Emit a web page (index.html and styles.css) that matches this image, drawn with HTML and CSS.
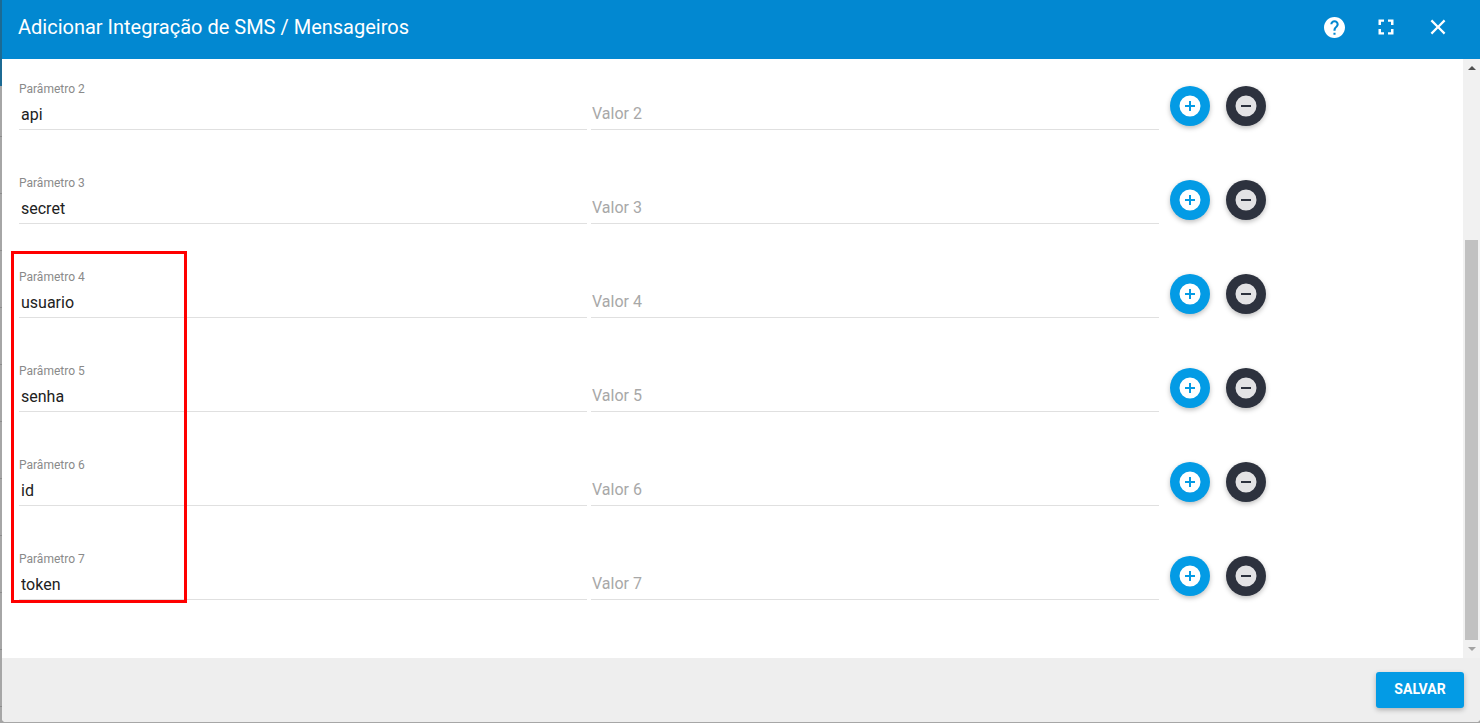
FILE: index.html
```html
<!DOCTYPE html>
<html lang="pt-BR">
<head>
    <meta charset="UTF-8">
    <meta name="viewport" content="width=device-width, initial-scale=1.0">
    <title>Adicionar Integração de SMS / Mensageiros</title>
    <link rel="stylesheet" href="styles.css">
</head>
<body>
    <!-- shared icons -->
    <svg class="sprite" aria-hidden="true">
        <symbol id="icon-add" viewBox="0 0 24 24">
            <path fill-rule="evenodd" d="M12 1.5a10.5 10.5 0 1 0 0 21a10.5 10.5 0 1 0 0-21zM17 13h-4v4h-2v-4H7v-2h4V7h2v4h4z"/>
        </symbol>
        <symbol id="icon-remove" viewBox="0 0 24 24">
            <path fill-rule="evenodd" d="M12 1.5a10.5 10.5 0 1 0 0 21a10.5 10.5 0 1 0 0-21zM17 13H7v-2h10z"/>
        </symbol>
    </svg>

    <div class="dialog" role="dialog" aria-labelledby="dialog-title">
        <header class="toolbar">
            <h1 class="toolbar-title" id="dialog-title">Adicionar Integração de SMS / Mensageiros</h1>
            <button class="icon-button" type="button" aria-label="Ajuda">
                <svg class="icon-help" viewBox="2 2 20 20"><path d="M12 2C6.48 2 2 6.48 2 12s4.480 10 10 10 10-4.480 10-10S17.520 2 12 2zm1 17h-2v-2h2v2zm2.070-7.750l-.9.920C13.450 12.900 13 13.500 13 15h-2v-.5c0-1.100.45-2.100 1.170-2.830l1.240-1.260c.37-.36.59-.86.59-1.410 0-1.100-.9-2-2-2s-2 .9-2 2H8c0-2.210 1.790-4 4-4s4 1.790 4 4c0 .88-.36 1.680-.93 2.250z"/></svg>
            </button>
            <button class="icon-button" type="button" aria-label="Tela cheia">
                <svg class="icon" viewBox="0 0 24 24"><path d="M7 14H4.500v5.500H10v-2.300H7V14zm-2.500-4H7V6.800h3V4.500H4.500V10zm12.500 7.200h-3v2.300h5.500V14H17v3.200zM14 4.500v2.300h3V10h2.500V4.500H14z"/></svg>
            </button>
            <button class="icon-button" type="button" aria-label="Fechar">
                <svg class="icon" viewBox="0 0 24 24"><path d="M19.400 6.200L17.800 4.600 12 10.400 6.200 4.600 4.600 6.200 10.400 12 4.600 17.800 6.200 19.400 12 13.600 17.800 19.400 19.400 17.800 13.600 12z"/></svg>
            </button>
        </header>

        <main class="content">
            <form class="params" id="params-form">
                <div class="row">
                    <div class="field">
                        <label for="param2">Parâmetro 2</label>
                        <input type="text" id="param2" value="api">
                    </div>
                    <div class="field value">
                        <input type="text" placeholder="Valor 2" aria-label="Valor 2">
                    </div>
                    <div class="actions">
                        <button class="fab add" type="button" aria-label="Adicionar"><svg class="icon"><use href="#icon-add"/></svg></button>
                        <button class="fab remove" type="button" aria-label="Remover"><svg class="icon"><use href="#icon-remove"/></svg></button>
                    </div>
                </div>
                <div class="row">
                    <div class="field">
                        <label for="param3">Parâmetro 3</label>
                        <input type="text" id="param3" value="secret">
                    </div>
                    <div class="field value">
                        <input type="text" placeholder="Valor 3" aria-label="Valor 3">
                    </div>
                    <div class="actions">
                        <button class="fab add" type="button" aria-label="Adicionar"><svg class="icon"><use href="#icon-add"/></svg></button>
                        <button class="fab remove" type="button" aria-label="Remover"><svg class="icon"><use href="#icon-remove"/></svg></button>
                    </div>
                </div>

                <div class="highlighted">
                    <div class="row">
                        <div class="field">
                            <label for="param4">Parâmetro 4</label>
                            <input type="text" id="param4" value="usuario">
                        </div>
                        <div class="field value">
                            <input type="text" placeholder="Valor 4" aria-label="Valor 4">
                        </div>
                        <div class="actions">
                            <button class="fab add" type="button" aria-label="Adicionar"><svg class="icon"><use href="#icon-add"/></svg></button>
                            <button class="fab remove" type="button" aria-label="Remover"><svg class="icon"><use href="#icon-remove"/></svg></button>
                        </div>
                    </div>
                    <div class="row">
                        <div class="field">
                            <label for="param5">Parâmetro 5</label>
                            <input type="text" id="param5" value="senha">
                        </div>
                        <div class="field value">
                            <input type="text" placeholder="Valor 5" aria-label="Valor 5">
                        </div>
                        <div class="actions">
                            <button class="fab add" type="button" aria-label="Adicionar"><svg class="icon"><use href="#icon-add"/></svg></button>
                            <button class="fab remove" type="button" aria-label="Remover"><svg class="icon"><use href="#icon-remove"/></svg></button>
                        </div>
                    </div>
                    <div class="row">
                        <div class="field">
                            <label for="param6">Parâmetro 6</label>
                            <input type="text" id="param6" value="id">
                        </div>
                        <div class="field value">
                            <input type="text" placeholder="Valor 6" aria-label="Valor 6">
                        </div>
                        <div class="actions">
                            <button class="fab add" type="button" aria-label="Adicionar"><svg class="icon"><use href="#icon-add"/></svg></button>
                            <button class="fab remove" type="button" aria-label="Remover"><svg class="icon"><use href="#icon-remove"/></svg></button>
                        </div>
                    </div>
                    <div class="row">
                        <div class="field">
                            <label for="param7">Parâmetro 7</label>
                            <input type="text" id="param7" value="token">
                        </div>
                        <div class="field value">
                            <input type="text" placeholder="Valor 7" aria-label="Valor 7">
                        </div>
                        <div class="actions">
                            <button class="fab add" type="button" aria-label="Adicionar"><svg class="icon"><use href="#icon-add"/></svg></button>
                            <button class="fab remove" type="button" aria-label="Remover"><svg class="icon"><use href="#icon-remove"/></svg></button>
                        </div>
                    </div>
                    <div class="marker"></div>
                </div>
            </form>

            <div class="scrollbar" aria-hidden="true">
                <svg class="arrow up" viewBox="0 0 8 4"><path d="M0 4L4 0L8 4z"/></svg>
                <div class="track"><div class="thumb"></div></div>
                <svg class="arrow down" viewBox="0 0 8 4"><path d="M0 0L4 4L8 0z"/></svg>
            </div>
        </main>

        <footer class="footer">
            <button class="save" type="submit" form="params-form">SALVAR</button>
        </footer>
    </div>
</body>
</html>
```

FILE: styles.css
```css
* {
    box-sizing: border-box;
}
body {
    margin: 0;
    min-height: 100vh;
    padding: 0 0 1px 2px;
    display: flex;
    font-family: Roboto, "Liberation Sans", sans-serif;
    /* page behind the dialog: dimmed header and list lines */
    background:
        linear-gradient(#1c6a93, #1c6a93) 0 0 / 100% 86px no-repeat,
        repeating-linear-gradient(#a6a6a6 0, #a6a6a6 56px, #8c8c8c 56px, #8c8c8c 57px) 0 80px;
}
button {
    border: 0;
    padding: 0;
    font-family: inherit;
    cursor: pointer;
}
.sprite {
    position: absolute;
    width: 0;
    height: 0;
}
.dialog {
    flex: 1;
    display: flex;
    flex-direction: column;
    background: #fff;
    border-radius: 0 0 4px 4px;
    overflow: hidden;
}

/* Toolbar */
.toolbar {
    display: flex;
    align-items: center;
    gap: 12px;
    padding: 7px 22px 12px 16px;
    background: #0288d1;
    color: #fff;
}
.toolbar-title {
    flex: 1;
    margin: 0;
    font-size: 20px;
    font-weight: 400;
}
.icon-button {
    width: 40px;
    height: 40px;
    display: flex;
    align-items: center;
    justify-content: center;
    background: none;
    color: #fff;
}
.icon {
    width: 24px;
    height: 24px;
    fill: currentColor;
}
.icon-help {
    width: 21px;
    height: 21px;
    fill: currentColor;
}

/* Form */
.content {
    flex: 1;
    display: flex;
}
.params {
    flex: 1;
    padding: 0 14px 0 17px;
}
.row {
    display: grid;
    grid-template-columns: 2fr 2fr 1fr;
    height: 94px;
    padding-top: 22px;
}
.field {
    display: flex;
    flex-direction: column;
    gap: 5px;
    padding-right: 4px;
}
.field label {
    font-size: 12px;
    line-height: 16px;
    color: #8a8a8a;
}
.field input {
    width: 100%;
    height: 28px;
    padding: 0 2px 2px;
    border: 0;
    border-bottom: 1px solid #e0e0e0;
    background: none;
    font-family: inherit;
    font-size: 16px;
    color: #212121;
    outline: none;
}
.field.value {
    padding-top: 21px;
}
.field.value input {
    padding: 0 1px 4px;
}
.field input::placeholder {
    color: #a8a8a8;
    opacity: 1;
}
.actions {
    display: flex;
    gap: 16px;
    padding: 5px 0 0 7px;
}
.fab {
    width: 40px;
    height: 40px;
    display: flex;
    align-items: center;
    justify-content: center;
    border-radius: 50%;
    box-shadow: 0 2px 5px rgba(0, 0, 0, 0.26);
}
.fab.add {
    background: #039be5;
    color: #fff;
}
.fab.remove {
    background: #2d323e;
    color: #e3e3e5;
}
.highlighted {
    position: relative;
}
.marker {
    position: absolute;
    top: 4px;
    bottom: 20px;
    left: -8px;
    width: 176px;
    border: 3px solid #f00;
    pointer-events: none;
}

/* Scrollbar */
.scrollbar {
    width: 17px;
    display: flex;
    flex-direction: column;
    align-items: center;
    background: #f1f1f1;
}
.arrow {
    width: 8px;
    height: 4px;
    margin: 7px 0;
}
.up {
    fill: #505050;
}
.down {
    fill: #a3a3a3;
}
.track {
    flex: 1;
    width: 13px;
    display: flex;
    align-items: flex-end;
}
.thumb {
    width: 100%;
    height: 71%;
    background: #c1c1c1;
}

/* Footer */
.footer {
    display: flex;
    justify-content: flex-end;
    padding: 14px 16px;
    background: #eee;
}
.save {
    min-width: 88px;
    height: 36px;
    padding-bottom: 2px;
    border-radius: 3px;
    background: #039be5;
    color: #fff;
    font-size: 14px;
    font-weight: 700;
    box-shadow: 0 2px 5px rgba(0, 0, 0, 0.26);
}
```
